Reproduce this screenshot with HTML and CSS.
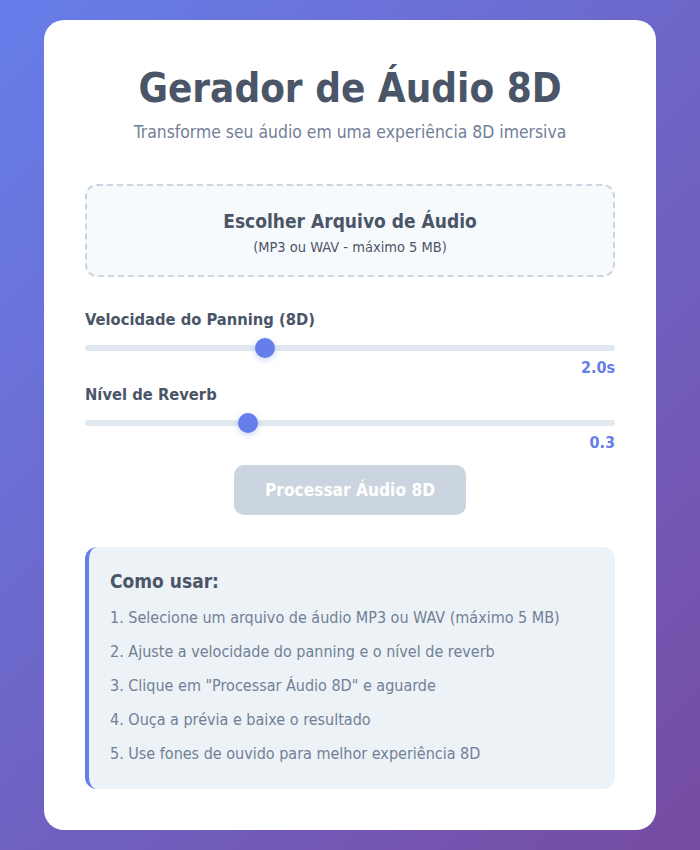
FILE: index.html
```html
<!DOCTYPE html>
<html lang="pt-BR">
<head>
<meta charset="utf-8">
<title>Gerador de Áudio 8D</title>
<link rel="stylesheet" href="styles.css">
</head>
<body>
<div class="card">
  <h1 class="title">Gerador de Áudio 8D</h1>
  <p class="subtitle">Transforme seu áudio em uma experiência 8D imersiva</p>

  <label class="upload">
    <span class="upload-title">Escolher Arquivo de Áudio</span>
    <span class="upload-sub">(MP3 ou WAV - máximo 5 MB)</span>
  </label>

  <div class="control">
    <div class="control-label">Velocidade do Panning (8D)</div>
    <input class="slider" type="range" min="0.5" max="5" step="0.1" value="2">
    <div class="control-value">2.0s</div>
  </div>

  <div class="control">
    <div class="control-label">Nível de Reverb</div>
    <input class="slider" type="range" min="0" max="1" step="0.1" value="0.3">
    <div class="control-value">0.3</div>
  </div>

  <div class="actions">
    <button class="process" disabled>Processar Áudio 8D</button>
  </div>

  <div class="info">
    <h3 class="info-title">Como usar:</h3>
    <ol class="info-list">
      <li>Selecione um arquivo de áudio MP3 ou WAV (máximo 5 MB)</li>
      <li>Ajuste a velocidade do panning e o nível de reverb</li>
      <li>Clique em "Processar Áudio 8D" e aguarde</li>
      <li>Ouça a prévia e baixe o resultado</li>
      <li>Use fones de ouvido para melhor experiência 8D</li>
    </ol>
  </div>
</div>
</body>
</html>
```

FILE: styles.css
```css
* { box-sizing: border-box; }

html, body { height: 100%; }

body {
  margin: 0;
  padding: 20px 44px;
  font-family: "DejaVu Sans Condensed", "DejaVu Sans", sans-serif;
  background: linear-gradient(135deg, #667eea 0%, #764ba2 100%);
  min-height: 850px;
}

.card {
  background: #ffffff;
  border-radius: 20px;
  padding: 40px 41px;
  height: 810px;
}

.title {
  margin: 0;
  padding-top: 2px;
  text-align: center;
  font-size: 40px;
  line-height: 52px;
  font-weight: bold;
  color: #4a5568;
}

.subtitle {
  margin: 7px 0 0;
  text-align: center;
  font-size: 17.4px;
  line-height: 22px;
  color: #718096;
}

.upload {
  margin-top: 41px;
  display: flex;
  flex-direction: column;
  align-items: center;
  justify-content: center;
  height: 93px;
  padding-top: 3px;
  border: 2px dashed #cbd5e0;
  border-radius: 12px;
  background: #f7fafc;
  color: #4a5568;
}

.upload-title {
  font-size: 19px;
  font-weight: bold;
  line-height: 24px;
}

.upload-sub {
  margin-top: 5px;
  font-size: 14.5px;
  line-height: 18px;
}

.control {
  margin-top: 33px;
}

.control + .control {
  margin-top: 7px;
}

.control-label {
  font-size: 16.4px;
  font-weight: bold;
  line-height: 20px;
  color: #4a5568;
}

.slider {
  -webkit-appearance: none;
  appearance: none;
  display: block;
  width: 100%;
  height: 6px;
  margin: 15px 0 0;
  border-radius: 3px;
  background: #e2e8f0;
  outline: none;
}

.slider::-webkit-slider-thumb {
  -webkit-appearance: none;
  appearance: none;
  width: 20px;
  height: 20px;
  border-radius: 50%;
  background: #667eea;
  box-shadow: 0 2px 6px rgba(102, 126, 234, 0.35);
  border: none;
}

.control-value {
  margin-top: 7px;
  text-align: right;
  font-size: 16px;
  font-weight: bold;
  line-height: 20px;
  color: #667eea;
}

.actions {
  display: flex;
  justify-content: center;
  margin-top: 12px;
}

.process {
  width: 232px;
  height: 50px;
  border: none;
  border-radius: 10px;
  background: #cbd5e0;
  color: #ffffff;
  font-family: inherit;
  font-size: 17.2px;
  font-weight: bold;
}

.info {
  margin-top: 32px;
  background: #edf2f7;
  border-left: 4px solid #667eea;
  border-radius: 12px;
  padding: 22px 24px 22px 21px;
  height: 242px;
}

.info-title {
  margin: 0;
  font-size: 19px;
  line-height: 24px;
  font-weight: bold;
  color: #4a5568;
}

.info-list {
  margin: 8px 0 0;
  padding: 0;
  list-style-position: inside;
  color: #718096;
  font-size: 16px;
}

.info-list li {
  line-height: 34px;
}
```
